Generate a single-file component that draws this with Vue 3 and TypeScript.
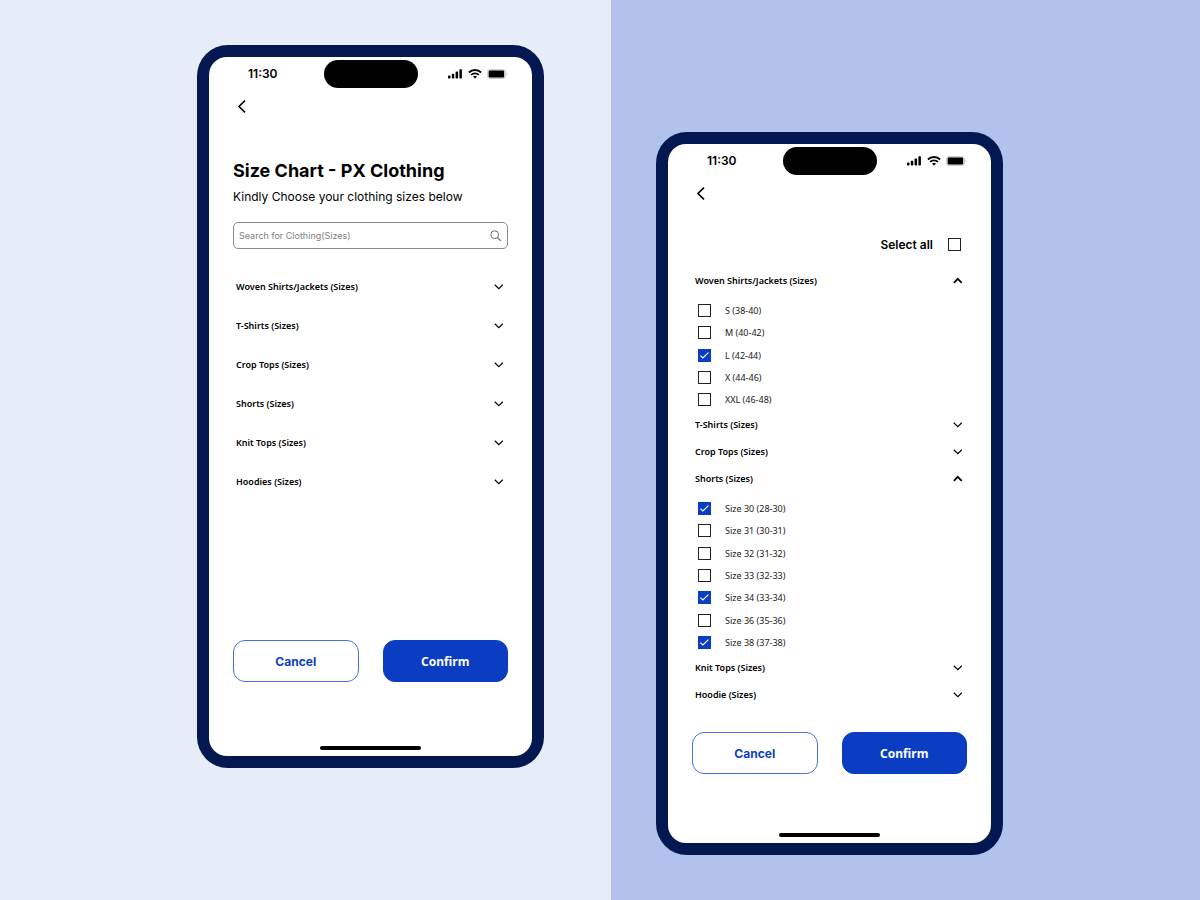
<script setup lang="ts">
import { reactive, computed } from 'vue'

interface Option {
  id: string
  label: string
  checked: boolean
}

interface Group {
  id: string
  title: string
  open: boolean
  options: Option[]
}

interface Screen {
  id: string
  kind: 'overview' | 'selection'
  search: string
  groups: Group[]
}

function group(id: string, title: string, options: [string, boolean][] = []): Group {
  return {
    id,
    title,
    open: options.length > 0,
    options: options.map(([label, checked], i) => ({ id: `${id}-${i}`, label, checked })),
  }
}

const screens = reactive<Screen[]>([
  {
    id: 'overview',
    kind: 'overview',
    search: '',
    groups: [
      group('a-woven', 'Woven Shirts/Jackets (Sizes)'),
      group('a-tshirts', 'T-Shirts (Sizes)'),
      group('a-crop', 'Crop Tops (Sizes)'),
      group('a-shorts', 'Shorts (Sizes)'),
      group('a-knit', 'Knit Tops (Sizes)'),
      group('a-hoodies', 'Hoodies (Sizes)'),
    ],
  },
  {
    id: 'selection',
    kind: 'selection',
    search: '',
    groups: [
      group('b-woven', 'Woven Shirts/Jackets (Sizes)', [
        ['S (38-40)', false],
        ['M (40-42)', false],
        ['L (42-44)', true],
        ['X (44-46)', false],
        ['XXL (46-48)', false],
      ]),
      group('b-tshirts', 'T-Shirts (Sizes)'),
      group('b-crop', 'Crop Tops (Sizes)'),
      group('b-shorts', 'Shorts (Sizes)', [
        ['Size 30 (28-30)', true],
        ['Size 31 (30-31)', false],
        ['Size 32 (31-32)', false],
        ['Size 33 (32-33)', false],
        ['Size 34 (33-34)', true],
        ['Size 36 (35-36)', false],
        ['Size 38 (37-38)', true],
      ]),
      group('b-knit', 'Knit Tops (Sizes)'),
      group('b-hoodie', 'Hoodie (Sizes)'),
    ],
  },
])

const selectable = computed(() => screens[1].groups.flatMap((g) => g.options))

const allSelected = computed({
  get: () => selectable.value.every((o) => o.checked),
  set: (value: boolean) => selectable.value.forEach((o) => (o.checked = value)),
})

/* Open groups share the spare height in proportion to their rows. */
function growFor(g: Group) {
  return { flexGrow: g.open ? g.options.length : 0 }
}
</script>

<template>
  <main class="stage">
    <section v-for="screen in screens" :key="screen.id" class="half" :class="screen.kind">
      <div class="phone">
        <div class="screen">
          <header class="status">
            <span class="time">11:30</span>
            <span class="island"></span>
            <span class="signals">
              <svg width="15" height="10" viewBox="0 0 15 10" aria-hidden="true">
                <rect x="0" y="6.4" width="2.5" height="3" rx="0.7" />
                <rect x="3.8" y="4.7" width="2.5" height="4.7" rx="0.7" />
                <rect x="7.6" y="2.4" width="2.5" height="7" rx="0.7" />
                <rect x="11.4" y="0.2" width="2.5" height="9.2" rx="0.7" />
              </svg>
              <svg width="14" height="10" viewBox="0 0 14 10" aria-hidden="true">
                <path d="M0.9 3.5 A8.8 8.8 0 0 1 13.1 3.5" fill="none" stroke="#000" stroke-width="1.9" />
                <path d="M3.1 5.9 A5.6 5.6 0 0 1 10.9 5.9" fill="none" stroke="#000" stroke-width="1.8" />
                <path d="M7 9.6 L5 7.7 A2.9 2.9 0 0 1 9 7.7 Z" />
              </svg>
              <svg width="21" height="10" viewBox="0 0 21 10" aria-hidden="true">
                <rect x="0.5" y="0.5" width="18" height="9" rx="2.6" fill="#dcdcdc" stroke="#cfcfcf" />
                <rect x="1.7" y="1.6" width="15.4" height="6.8" rx="1.2" />
                <path d="M19.6 3.4 A1.8 1.8 0 0 1 19.6 6.6 Z" fill="#c4c4c4" />
              </svg>
            </span>
          </header>

          <nav class="nav">
            <button type="button" class="back" aria-label="Back">
              <svg width="12" height="16" viewBox="0 0 12 16" aria-hidden="true">
                <path d="M9 2.6 L3 8.5 L9 14.4" fill="none" stroke="#000" stroke-width="1.6" />
              </svg>
            </button>
          </nav>

          <template v-if="screen.kind === 'overview'">
            <h1 class="title">Size Chart - PX Clothing</h1>
            <p class="subtitle">Kindly Choose your clothing sizes below</p>
            <label class="search">
              <input
                v-model="screen.search"
                type="text"
                placeholder="Search for Clothing(Sizes)"
                aria-label="Search for Clothing(Sizes)"
              />
              <svg width="12" height="12" viewBox="0 0 12 12" aria-hidden="true">
                <circle cx="4.7" cy="4.7" r="3.9" fill="none" stroke="#6b6b6b" />
                <path d="M7.5 7.5 L10.8 10.8" stroke="#6b6b6b" stroke-width="1.1" />
              </svg>
            </label>
          </template>

          <label v-else class="select-all">
            <span>Select all</span>
            <span class="check">
              <input v-model="allSelected" type="checkbox" />
              <svg viewBox="0 0 13 13" aria-hidden="true">
                <path d="M2.4 6.6 L4.9 9 L10.4 3.6" fill="none" stroke="#fff" stroke-width="1.2" />
              </svg>
            </span>
          </label>

          <div class="groups">
            <section v-for="g in screen.groups" :key="g.id" class="group" :style="growFor(g)">
              <h2 class="group-head">
                <button
                  type="button"
                  class="toggle"
                  :aria-expanded="g.open"
                  @click="g.open = !g.open"
                >
                  <span>{{ g.title }}</span>
                  <svg width="12" height="8" viewBox="0 0 12 8" aria-hidden="true">
                    <path v-if="g.open" d="M1.9 5.8 L5.8 1.8 L9.7 5.8" fill="none" stroke="#000" stroke-width="1.7" />
                    <path v-else d="M1.8 1.8 L5.8 5.6 L9.8 1.8" fill="none" stroke="#000" stroke-width="1.2" />
                  </svg>
                </button>
              </h2>
              <ul v-if="g.open && g.options.length" class="options">
                <li v-for="o in g.options" :key="o.id">
                  <label class="option">
                    <span class="check">
                      <input v-model="o.checked" type="checkbox" />
                      <svg viewBox="0 0 13 13" aria-hidden="true">
                        <path d="M2.4 6.6 L4.9 9 L10.4 3.6" fill="none" stroke="#fff" stroke-width="1.2" />
                      </svg>
                    </span>
                    <span>{{ o.label }}</span>
                  </label>
                </li>
              </ul>
            </section>
          </div>

          <footer class="actions">
            <button type="button" class="btn cancel">Cancel</button>
            <button type="button" class="btn confirm">Confirm</button>
          </footer>
          <div class="home-bar"></div>
        </div>
      </div>
    </section>
  </main>
</template>

<style>
body {
  margin: 0;
}
</style>

<style scoped>
.stage {
  display: grid;
  grid-template-columns: 611fr 589fr;
  min-height: 100vh;
  font-family: Inter, 'Liberation Sans', sans-serif;
  color: #000;
}

.half {
  box-sizing: border-box;
  display: flex;
  align-items: flex-start;
}

.overview {
  justify-content: flex-end;
  padding: 45px 67px 45px 24px;
  background: #e6ecf8;
}

.selection {
  padding: 132px 24px 45px 45px;
  background: #b3c2ec;
}

.phone {
  box-sizing: border-box;
  width: 347px;
  padding: 12px;
  border-radius: 31px;
  background: #031851;
}

.screen {
  display: flex;
  flex-direction: column;
  box-sizing: border-box;
  min-height: 699px;
  padding: 3px 24px 6px;
  border-radius: 18px;
  background: #fff;
}

.status {
  display: grid;
  grid-template-columns: 1fr auto 1fr;
  align-items: center;
}

.time {
  padding-left: 15px;
  font-size: 12px;
  line-height: 16px;
  font-weight: 600;
}

.island {
  width: 94px;
  height: 28px;
  border-radius: 14px;
  background: #000;
}

.signals {
  display: flex;
  align-items: center;
  justify-content: flex-end;
  gap: 5px;
}

.nav {
  display: flex;
  margin-top: 6px;
}

.back {
  display: flex;
  align-items: center;
  height: 24px;
  padding: 0 3px;
  border: 0;
  background: none;
  cursor: pointer;
}

.title {
  margin: 41px 0 0;
  font-size: 18px;
  line-height: 24px;
  font-weight: 700;
}

.subtitle {
  margin: 6px 0 0;
  font-size: 12px;
  line-height: 16px;
}

.search {
  display: flex;
  align-items: center;
  box-sizing: border-box;
  height: 27px;
  margin-top: 17px;
  padding: 0 5px;
  border: 1px solid #8a8a8a;
  border-radius: 5px;
}

.search input {
  flex: 1;
  min-width: 0;
  padding: 0;
  border: 0;
  outline: 0;
  background: none;
  font: 9px/12px Inter, 'Liberation Sans', sans-serif;
}

.search input::placeholder {
  color: #808080;
  opacity: 1;
}

.select-all {
  display: flex;
  align-items: center;
  justify-content: flex-end;
  gap: 15px;
  height: 24px;
  margin-top: 27px;
  padding-right: 6px;
  font-size: 12px;
  font-weight: 600;
}

.groups {
  display: flex;
  flex: 1;
  flex-direction: column;
  font-family: 'Noto Sans', 'Open Sans', sans-serif;
  font-size: 9px;
}

.overview .groups {
  margin-top: 18px;
}

.selection .groups {
  margin: 11px 0 24px;
}

.group {
  display: flex;
  flex-direction: column;
}

.group-head {
  margin: 0;
  font-size: 9px;
}

.toggle {
  display: flex;
  align-items: center;
  justify-content: space-between;
  width: 100%;
  height: 27px;
  padding: 0 3px;
  border: 0;
  background: none;
  color: #000;
  font: inherit;
  font-weight: 600;
  cursor: pointer;
}

.overview .toggle {
  height: 39px;
}

.options {
  display: flex;
  flex: 1;
  flex-direction: column;
  margin: 0;
  padding: 5px 6px 0;
  list-style: none;
}

.options li {
  display: flex;
  flex: 1 0 22px;
  align-items: center;
}

.option {
  display: flex;
  align-items: center;
  gap: 14px;
  line-height: 15px;
  color: #1a1a1a;
}

.check {
  display: grid;
  width: 13px;
  height: 13px;
}

.check input,
.check svg {
  grid-area: 1 / 1;
}

.check input {
  box-sizing: border-box;
  width: 13px;
  height: 13px;
  margin: 0;
  border: 1px solid #222;
  appearance: none;
  background: #fff;
}

.check input:checked {
  border-color: #0a3dc2;
  background: #0a3dc2;
}

.check svg {
  visibility: hidden;
  pointer-events: none;
}

.check input:checked + svg {
  visibility: visible;
}

.actions {
  display: grid;
  grid-template-columns: 1fr 1fr;
  gap: 24px;
}

.overview .actions {
  margin-bottom: 64px;
}

.selection .actions {
  margin-bottom: 59px;
}

.btn {
  height: 42px;
  padding: 0;
  border: 1px solid #0a3dc2;
  border-radius: 12px;
  font-size: 12px;
  font-weight: 700;
  cursor: pointer;
}

.cancel {
  border-color: #4a72d6;
  background: #fff;
  color: #0a3dc2;
  font-family: Inter, 'Liberation Sans', sans-serif;
}

.confirm {
  background: #0a3dc2;
  color: #fff;
  font-family: 'Noto Sans', 'Open Sans', sans-serif;
}

.home-bar {
  align-self: center;
  width: 101px;
  height: 4px;
  border-radius: 2px;
  background: #000;
}
</style>
